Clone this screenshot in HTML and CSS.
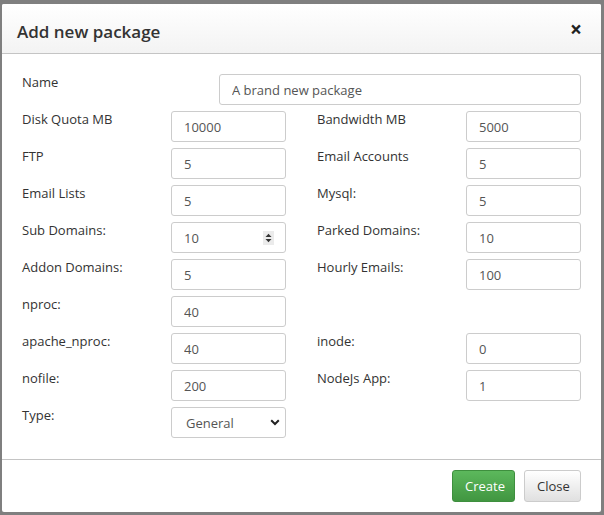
FILE: index.html
```html
<!DOCTYPE html>
<html>
<head>
<meta charset="utf-8">
<link rel="stylesheet" href="styles.css">
</head>
<body>
<div class="modal">
  <div class="modal-header">
    <h4 class="modal-title">Add new package</h4>
    <span class="close">×</span>
  </div>
  <div class="modal-body">
    <div class="name-row">
      <label class="lbl name-lbl">Name</label>
      <input class="ctl name-ctl" type="text" value="A brand new package">
    </div>
    <div class="grid">
      <label class="lbl">Disk Quota MB</label><input class="ctl" value="10000">
      <label class="lbl">Bandwidth MB</label><input class="ctl" value="5000">

      <label class="lbl">FTP</label><input class="ctl" value="5">
      <label class="lbl">Email Accounts</label><input class="ctl" value="5">

      <label class="lbl">Email Lists</label><input class="ctl" value="5">
      <label class="lbl">Mysql:</label><input class="ctl" value="5">

      <label class="lbl">Sub Domains:</label>
      <div class="spin-wrap">
        <input class="ctl" value="10">
        <svg class="spinner" width="11" height="14" viewBox="0 0 11 14"><rect width="11" height="14" fill="#ebebeb"/><path d="M2.5 6 L5.5 2.8 L8.5 6 Z" fill="#333"/><path d="M2.5 8 L5.5 11.2 L8.5 8 Z" fill="#333"/></svg>
      </div>
      <label class="lbl">Parked Domains:</label><input class="ctl" value="10">

      <label class="lbl">Addon Domains:</label><input class="ctl" value="5">
      <label class="lbl">Hourly Emails:</label><input class="ctl" value="100">

      <label class="lbl">nproc:</label><input class="ctl" value="40">
      <span></span><span></span>

      <label class="lbl">apache_nproc:</label><input class="ctl" value="40">
      <label class="lbl">inode:</label><input class="ctl" value="0">

      <label class="lbl">nofile:</label><input class="ctl" value="200">
      <label class="lbl">NodeJs App:</label><input class="ctl" value="1">

      <label class="lbl">Type:</label>
      <div class="select">
        <span>General</span>
        <svg width="10" height="7" viewBox="0 0 10 7"><path d="M1.2 1.3 L5 5 L8.8 1.3" fill="none" stroke="#222" stroke-width="2"/></svg>
      </div>
      <span></span><span></span>
    </div>
  </div>
  <div class="modal-footer">
    <button class="btn btn-success">Create</button>
    <button class="btn btn-default">Close</button>
  </div>
</div>
</body>
</html>
```
FILE: styles.css
```css
* { box-sizing: border-box; }
html, body { margin: 0; padding: 0; }
body {
  background: #7f7f7f;
  font-family: "Open Sans", "Liberation Sans", sans-serif;
  font-size: 13px;
  color: #333;
  width: 604px;
  height: 515px;
  overflow: hidden;
}
.modal {
  margin: 4px 0 0 2px;
  width: 599px;
  height: 508px;
  background: #fff;
  border-radius: 2px;
  display: flex;
  flex-direction: column;
}
.modal-header {
  height: 50px;
  padding: 5px 15px 0 15px;
  display: flex;
  align-items: center;
  justify-content: space-between;
  background: linear-gradient(#ffffff, #f3f3f3);
  border-bottom: 1px solid #c4c4c4;
  border-radius: 2px 2px 0 0;
}
.modal-title {
  margin: 0;
  font-size: 17px;
  font-weight: 600;
  color: #333;
}
.close {
  font-size: 21px;
  font-weight: 700;
  color: #222;
  line-height: 1;
  margin-right: 4px;
  margin-top: -3px;
}
.modal-body {
  flex: 1;
  padding: 20px 20px 0 20px;
}
.name-row {
  display: flex;
  margin-bottom: 6px;
}
.name-lbl { width: 197px; }
.name-ctl { flex: 1; width: auto !important; margin-right: 0; }
.lbl {
  padding-top: 0;
  line-height: 17px;
  color: #333;
}
.grid {
  display: grid;
  grid-template-columns: 149px 146px 149px 115px;
  row-gap: 6px;
}
.ctl {
  width: 115px;
  height: 31px;
  border: 1px solid #cccccc;
  border-radius: 3px;
  padding: 0 12px;
  font-family: "Open Sans", "Liberation Sans", sans-serif;
  font-size: 13px;
  color: #555;
  background: #fff;
  outline: none;
  margin: 0;
}
.spin-wrap {
  position: relative;
  width: 115px;
  height: 31px;
}
.spinner {
  position: absolute;
  left: 92px;
  top: 9px;
}
.select {
  width: 115px;
  height: 31px;
  border: 1px solid #cccccc;
  border-radius: 3px;
  padding: 0 5px 0 14px;
  display: flex;
  align-items: center;
  justify-content: space-between;
  color: #555;
}
.modal-footer {
  height: 53px;
  border-top: 1px solid #c4c4c4;
  display: flex;
  justify-content: flex-end;
  align-items: flex-start;
  padding: 10px 20px 0 0;
  gap: 9px;
}
.btn {
  height: 32px;
  font-family: "Open Sans", "Liberation Sans", sans-serif;
  font-size: 13px;
  border-radius: 3px;
  padding: 0 12px;
  margin: 0;
}
.btn-success {
  width: 63px;
  color: #fff;
  background: linear-gradient(#5cb85c, #419641);
  border: 1px solid #3e8f3e;
}
.btn-default {
  width: 57px;
  color: #333;
  background: linear-gradient(#ffffff, #e0e0e0);
  border: 1px solid #cccccc;
}
```
